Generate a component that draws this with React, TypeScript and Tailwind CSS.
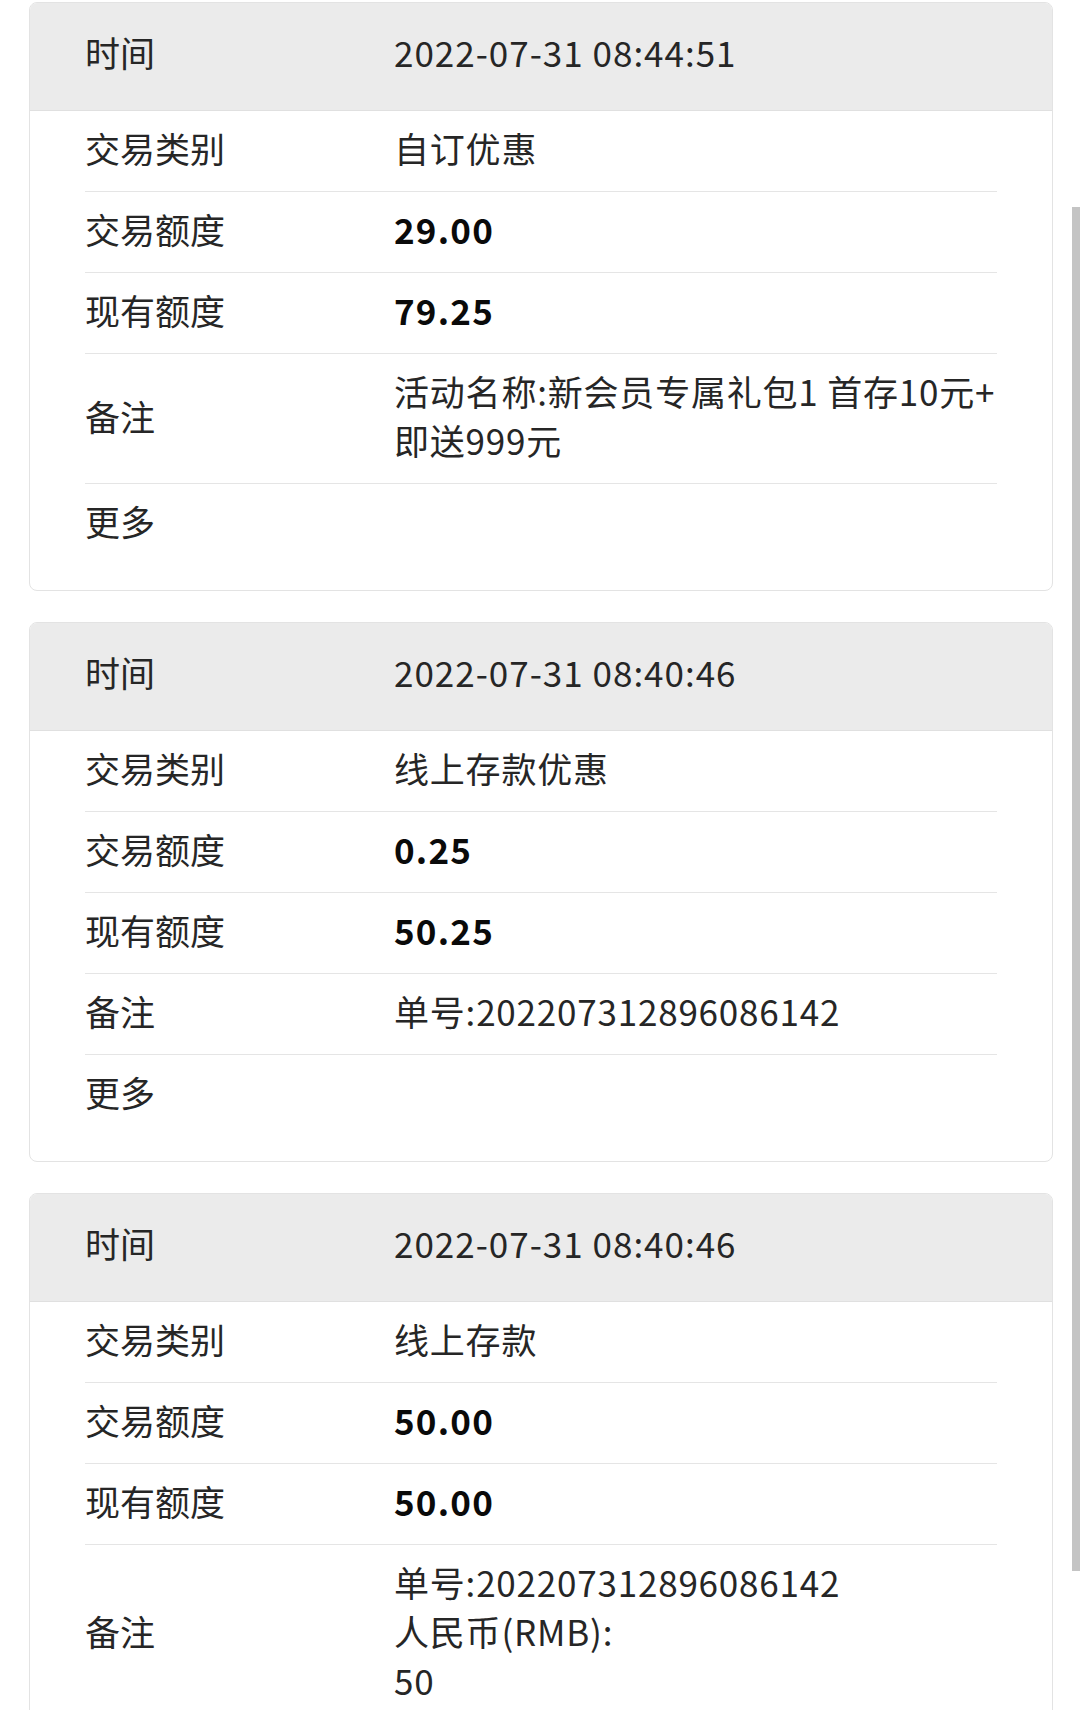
import React from 'react';

type Row = { label: string; value?: string[]; bold?: boolean };

type Record = { time: string; rows: Row[] };

const records: Record[] = [
  {
    time: '2022-07-31 08:44:51',
    rows: [
      { label: '交易类别', value: ['自订优惠'] },
      { label: '交易额度', value: ['29.00'], bold: true },
      { label: '现有额度', value: ['79.25'], bold: true },
      { label: '备注', value: ['活动名称:新会员专属礼包1 首存10元+', '即送999元'] },
      { label: '更多' },
    ],
  },
  {
    time: '2022-07-31 08:40:46',
    rows: [
      { label: '交易类别', value: ['线上存款优惠'] },
      { label: '交易额度', value: ['0.25'], bold: true },
      { label: '现有额度', value: ['50.25'], bold: true },
      { label: '备注', value: ['单号:202207312896086142'] },
      { label: '更多' },
    ],
  },
  {
    time: '2022-07-31 08:40:46',
    rows: [
      { label: '交易类别', value: ['线上存款'] },
      { label: '交易额度', value: ['50.00'], bold: true },
      { label: '现有额度', value: ['50.00'], bold: true },
      { label: '备注', value: ['单号:202207312896086142', '人民币(RMB):', '50'] },
    ],
  },
];

function RecordCard({ record }: { record: Record }) {
  return (
    <div className="overflow-hidden rounded-[8px] border border-[#e3e3e3] bg-white">
      {/* Header */}
      <div className="flex h-[108px] items-center border-b border-[#e0e0e0] bg-[#ebebeb] px-[55px] pb-[8px]">
        <div className="w-[309px] flex-none text-[#262626]">时间</div>
        <div className="tracking-[1px] text-[#262626]">{record.time}</div>
      </div>

      <div className="px-[55px] pb-[26px]">
        {record.rows.map((row, i) => {
          const last = i === record.rows.length - 1;
          return (
            <div
              key={i}
              className={`flex items-center pt-[12px] pb-[19px] leading-[49px] ${last ? '' : 'border-b border-[#e5e5e5]'}`}
            >
              <div className="w-[309px] flex-none text-[#262626]">{row.label}</div>
              {row.value && (
                <div
                  className={
                    row.bold
                      ? 'font-bold tracking-[1.2px] text-[#0a0a0a]'
                      : 'tracking-[0.8px] text-[#262626]'
                  }
                >
                  {row.value.map((line, j) => (
                    <div key={j} className="whitespace-nowrap">
                      {line}
                    </div>
                  ))}
                </div>
              )}
            </div>
          );
        })}
      </div>
    </div>
  );
}

export default function App() {
  return (
    <div
      className="relative h-[1710px] overflow-hidden bg-white text-[35px]"
      style={{ fontFamily: '"Noto Sans CJK SC", "Noto Sans", sans-serif' }}
    >
      <div className="flex flex-col gap-[31px] pl-[29px] pr-[27px] pt-[2px]">
        {records.map((r, i) => (
          <RecordCard key={i} record={r} />
        ))}
      </div>

      {/* scrollbar thumb */}
      <div className="absolute right-0 top-[207px] h-[1364px] w-[8px] bg-[#c4c4c4]" />
    </div>
  );
}
